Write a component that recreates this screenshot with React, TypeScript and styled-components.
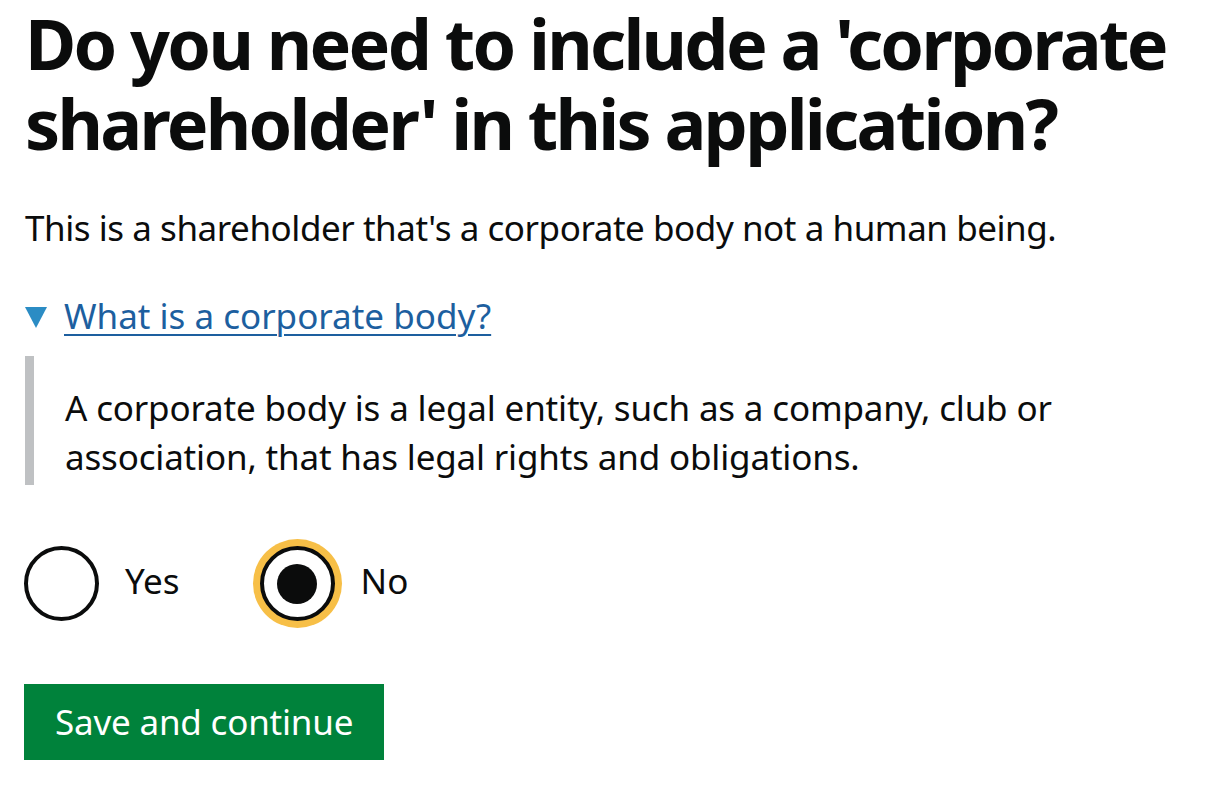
import React from "react";
import styled, { createGlobalStyle } from "styled-components";

const GlobalStyle = createGlobalStyle`
  html, body { margin: 0; padding: 0; background: #ffffff; }
  body {
    font-family: "Noto Sans", "Open Sans", Arial, sans-serif;
    color: #0b0c0c;
    -webkit-font-smoothing: antialiased;
  }
`;

const Page = styled.main`
  padding: 3px 24px 0 25px;
  width: 1210px;
  box-sizing: border-box;
`;

const Heading = styled.h1`
  margin: 0 0 40px;
  font-size: 70px;
  line-height: 80px;
  font-weight: 700;
  letter-spacing: -2.7px;
  white-space: nowrap;
`;

const Body = styled.p`
  margin: 0 0 38px;
  font-size: 35px;
  line-height: 50px;
  letter-spacing: -0.45px;
`;

const Details = styled.details`
  margin: 0 0 61px;
`;

const Summary = styled.summary`
  list-style: none;
  display: flex;
  align-items: center;
  gap: 17px;
  font-size: 35px;
  line-height: 50px;
  cursor: pointer;
  &::-webkit-details-marker { display: none; }
`;

const Arrow = styled.span`
  width: 0;
  height: 0;
  border-left: 11.5px solid transparent;
  border-right: 11.5px solid transparent;
  border-top: 21px solid #2b8cc4;
  margin-top: 3px;
`;

const SummaryLink = styled.span`
  color: #1d5f9f;
  text-decoration: underline;
  text-decoration-thickness: 2px;
  text-underline-offset: 5px;
`;

const Reveal = styled.div`
  margin-top: 15px;
  border-left: 9px solid #bfc1c3;
  padding: 27px 0 4px 31px;
  font-size: 35px;
  line-height: 49px;
  letter-spacing: -0.17px;
`;

const RadioGroup = styled.div`
  display: flex;
  align-items: center;
  gap: 80px;
  margin-left: -1px;
`;

const RadioItem = styled.label`
  display: flex;
  align-items: center;
  gap: 26px;
  font-size: 35px;
  line-height: 50px;
`;

const RadioCircle = styled.span<{ $checked?: boolean; $focused?: boolean }>`
  box-sizing: border-box;
  width: 75px;
  height: 75px;
  border-radius: 50%;
  border: 4px solid #0b0c0c;
  background: #ffffff;
  display: flex;
  align-items: center;
  justify-content: center;
  box-shadow: ${(p) => (p.$focused ? "0 0 0 7px #f7bf47" : "none")};
  &::after {
    content: "";
    display: ${(p) => (p.$checked ? "block" : "none")};
    width: 40px;
    height: 40px;
    border-radius: 50%;
    background: #0b0c0c;
  }
`;

const RadioLabel = styled.span`
  padding-bottom: 5px;
`;

const Button = styled.button`
  display: block;
  margin-top: 63px;
  margin-left: -1px;
  width: 360px;
  height: 76px;
  border: 0;
  padding: 0 0 0 31px;
  background: #00823b;
  color: #ffffff;
  font-family: "Noto Sans", "Open Sans", Arial, sans-serif;
  font-size: 35px;
  line-height: 50px;
  letter-spacing: -0.2px;
  white-space: nowrap;
  text-align: left;
  box-shadow: 0 4px 0 #003618;
  cursor: pointer;
`;

export default function App() {
  return (
    <>
      <GlobalStyle />
      <Page>
        <Heading>
          Do you need to include a 'corporate
          <br />
          shareholder' in this application?
        </Heading>
        <Body>This is a shareholder that's a corporate body not a human being.</Body>
        <Details open>
          <Summary>
            <Arrow />
            <SummaryLink>What is a corporate body?</SummaryLink>
          </Summary>
          <Reveal>
            A corporate body is a legal entity, such as a company, club or
            <br />
            association, that has legal rights and obligations.
          </Reveal>
        </Details>
        <RadioGroup>
          <RadioItem>
            <RadioCircle />
            <RadioLabel>Yes</RadioLabel>
          </RadioItem>
          <RadioItem>
            <RadioCircle $checked $focused />
            <RadioLabel>No</RadioLabel>
          </RadioItem>
        </RadioGroup>
        <Button>Save and continue</Button>
      </Page>
    </>
  );
}
